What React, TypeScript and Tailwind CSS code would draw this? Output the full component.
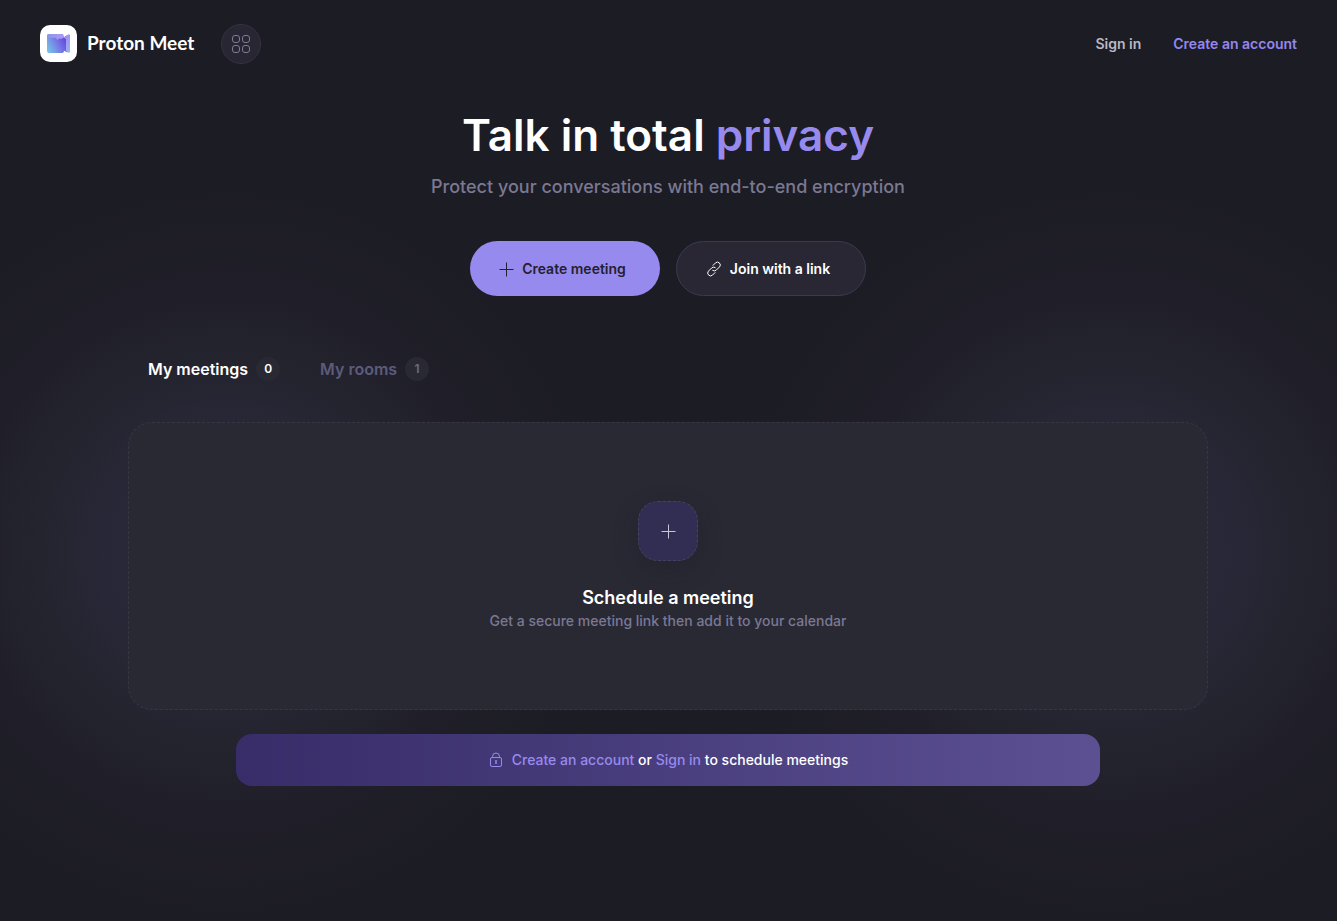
import type { ReactNode } from "react";

function AppLogo() {
  return (
    <svg width="37" height="37" viewBox="0 0 37 37" fill="none" aria-hidden="true">
      <defs>
        <linearGradient id="body" x1="7" y1="26" x2="26" y2="16" gradientUnits="userSpaceOnUse">
          <stop stopColor="#72c8e6" />
          <stop offset="0.5" stopColor="#7884e6" />
          <stop offset="1" stopColor="#6a46e2" />
        </linearGradient>
        <linearGradient id="top" x1="7" y1="11" x2="24" y2="11" gradientUnits="userSpaceOnUse">
          <stop stopColor="#8a94ea" />
          <stop offset="1" stopColor="#a99cf2" />
        </linearGradient>
        <linearGradient id="lens" x1="27" y1="10" x2="29" y2="28" gradientUnits="userSpaceOnUse">
          <stop stopColor="#a294f0" />
          <stop offset="1" stopColor="#93b4ee" />
        </linearGradient>
      </defs>
      <rect width="37" height="37" rx="10" fill="#fff" />
      <path d="M7 11a2 2 0 0 1 2-2h12.500a2 2 0 0 1 2 2v1.500l4-2.500v17.500L24 25.800V26a2 2 0 0 1-2 2H9a2 2 0 0 1-2-2z" fill="url(#body)" />
      <path d="M7 11a2 2 0 0 1 2-2h12.500a2 2 0 0 1 2 2v1.500L21 14l-1.500-.8L17.500 15l-2-2.300H8.500a1.500 1.500 0 0 0-1.500 1z" fill="url(#top)" />
      <path d="M23.500 12.500l4.800-3a1.100 1.100 0 0 1 1.700 1v16a1.100 1.100 0 0 1-1.700 1L26 26V14z" fill="url(#lens)" />
    </svg>
  );
}

function PlusIcon() {
  return (
    <svg width="16" height="16" viewBox="0 0 16 16" fill="none" stroke="currentColor" aria-hidden="true">
      <path d="M8.500 1.500v14M1.500 8.500h14" />
    </svg>
  );
}

function LinkIcon() {
  return (
    <svg width="16" height="16" viewBox="0 0 24 24" fill="none" stroke="currentColor" strokeWidth="1.500" strokeLinecap="round" aria-hidden="true">
      <path d="M10.200 14.200a4.300 4.300 0 0 0 5.300-.6l4.800-4.800a4.250 4.250 0 0 0-6-6l-3.800 3.800" />
      <path d="M13.800 9.800a4.300 4.300 0 0 0-5.300.6l-4.800 4.800a4.250 4.250 0 0 0 6 6l3.800-3.800" />
    </svg>
  );
}

function LockIcon() {
  return (
    <svg width="16" height="16" viewBox="0 0 16 16" fill="none" stroke="currentColor" aria-hidden="true">
      <rect x="2.500" y="5.500" width="11" height="9" rx="1.500" />
      <path d="M4.500 5.500V4.500a3.500 3.500 0 0 1 7 0v1" />
      <path d="M8 8v4" strokeWidth="1.500" />
    </svg>
  );
}

function GridIcon() {
  return (
    <svg width="20" height="20" viewBox="0 0 20 20" fill="none" stroke="currentColor" aria-hidden="true">
      <rect x="1.500" y="1.500" width="7" height="7" rx="2.500" />
      <rect x="11.500" y="1.500" width="7" height="7" rx="2.500" />
      <rect x="1.500" y="11.500" width="7" height="7" rx="2.500" />
      <rect x="11.500" y="11.500" width="7" height="7" rx="2.500" />
    </svg>
  );
}

function Tab({ label, count, active = false }: { label: string; count: number; active?: boolean }) {
  return (
    <button
      type="button"
      role="tab"
      aria-selected={active}
      className={`flex items-center gap-2 px-5 text-base font-semibold ${active ? "text-white" : "text-[#5d5b7c]"}`}
    >
      {label}
      <span className={`flex size-6 items-center justify-center rounded-full bg-[#292934] text-xs ${active ? "" : "text-[#6d6a85]"}`}>
        {count}
      </span>
    </button>
  );
}

function PillButton({ className, children }: { className: string; children: ReactNode }) {
  return (
    <button type="button" className={`flex h-[55px] w-[190px] items-center justify-center gap-2 rounded-full pr-1.5 text-sm font-semibold ${className}`}>
      {children}
    </button>
  );
}

export default function App() {
  return (
    <div className="flex min-h-screen flex-col bg-[#1c1c24] bg-[radial-gradient(380px_380px_at_17%_60%,#2b2a40_0%,#292839_28%,#24242f_50%,#201f29_68%,#1c1c24_100%),radial-gradient(380px_380px_at_83%_60%,#2b2a40_0%,#292839_28%,#24242f_50%,#201f29_68%,#1c1c24_100%)] bg-blend-lighten font-[Inter,sans-serif] text-white">
      <header className="flex h-[88px] items-center justify-between px-10">
        <div className="flex items-center gap-[27px]">
          <a href="#" className="flex items-center gap-2.5 pb-px">
            <AppLogo />
            <span className="font-[Lato,sans-serif] text-[19px] font-bold">Proton Meet</span>
          </a>
          <button type="button" aria-label="Proton apps" className="flex size-10 items-center justify-center rounded-full border border-[#34333f] bg-[#272632] text-[#7f7b96]">
            <GridIcon />
          </button>
        </div>
        <nav className="flex items-center gap-8 text-sm font-semibold">
          <a href="#" className="text-[#b9b8c6]">Sign in</a>
          <a href="#" className="text-[#9487ee]">Create an account</a>
        </nav>
      </header>

      <main className="flex flex-col items-center pt-4 pr-[25px] pl-6">
        <h1 className="text-[44px] leading-[62px] font-semibold">
          Talk in total <span className="text-[#978aee]">privacy</span>
        </h1>
        <p className="mt-[9px] text-lg leading-6 font-medium text-[#7b7893]">Protect your conversations with end-to-end encryption</p>

        <div className="mt-[42px] flex gap-4">
          <PillButton className="bg-[#978aee] text-[#232130]">
            <PlusIcon />
            Create meeting
          </PillButton>
          <PillButton className="border border-[#3d3a50] bg-[#282733]">
            <LinkIcon />
            Join with a link
          </PillButton>
        </div>

        <section className="mt-[61px] flex w-full max-w-[1080px] flex-col">
          <div role="tablist" className="flex">
            <Tab label="My meetings" count={0} active />
            <Tab label="My rooms" count={1} />
          </div>

          <div className="mt-[41px] flex h-72 flex-col items-center justify-center rounded-3xl border border-dashed border-[#373644] bg-[#292934]">
            <button type="button" aria-label="Schedule a meeting" className="flex size-[60px] items-center justify-center rounded-[20px] border border-dashed border-[#46415f] bg-[#322d52] text-[#c9c6d8] shadow-[0_8px_24px_rgba(28,28,36,0.3)]">
              <PlusIcon />
            </button>
            <h2 className="mt-6 text-lg leading-[26px] font-semibold">Schedule a meeting</h2>
            <p className="text-sm leading-5 font-medium text-[#7b7893]">Get a secure meeting link then add it to your calendar</p>
          </div>

          <div className="mt-6 flex h-[52px] w-4/5 items-center justify-center gap-2 self-center rounded-2xl bg-linear-to-r from-[#382d69] to-[#5c5093] text-sm font-medium">
            <span className="text-[#978aee]"><LockIcon /></span>
            <p>
              <a href="#" className="text-[#978aee]">Create an account</a> or <a href="#" className="text-[#978aee]">Sign in</a> to schedule meetings
            </p>
          </div>
        </section>
      </main>
    </div>
  );
}
